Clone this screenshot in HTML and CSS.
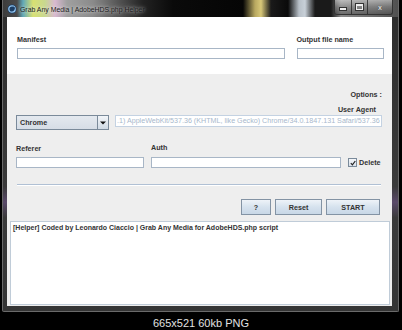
FILE: index.html
```html
<html>
<head>
    <title>Grab Any Media | AdobeHDS.php Helper</title>
    <link rel="stylesheet" href="styles.css">
</head>
<body>
    <div class="window">
        <div class="titlebar">
            <svg class="app-icon" width="10" height="10" viewBox="0 0 10 10">
                <circle cx="5" cy="5" r="4.5" fill="#1d3f66"/>
                <circle cx="5" cy="5" r="3.2" fill="none" stroke="#8fc3ee" stroke-width="1.3"/>
                <circle cx="6.3" cy="4" r="1.6" fill="#1d3f66"/>
            </svg>
            <span class="title">Grab Any Media | AdobeHDS.php Helper</span>
            <div class="caption-buttons">
                <div class="cap-btn min"><span></span></div>
                <div class="cap-btn max"><span></span></div>
                <div class="cap-btn close">x</div>
            </div>
        </div>

        <div class="client">
            <div class="top-panel">
                <div class="field manifest">
                    <label>Manifest</label>
                    <div class="input"></div>
                </div>
                <div class="field output">
                    <label>Output file name</label>
                    <div class="input"></div>
                </div>
            </div>

            <div class="options">
                <div class="opt-title">Options :</div>
                <div class="ua-label">User Agent</div>
                <div class="ua-row">
                    <div class="combo">
                        <span class="combo-text">Chrome</span>
                        <span class="combo-arrow">
                            <svg width="6" height="4" viewBox="0 0 6 4"><path d="M0 0.5H6L3 3.5Z" fill="#111"/></svg>
                        </span>
                    </div>
                    <div class="ua-field">
                        <span>.1) AppleWebKit/537.36 (KHTML, like Gecko) Chrome/34.0.1847.131 Safari/537.36</span>
                    </div>
                </div>
                <div class="auth-row">
                    <div class="field referer">
                        <label>Referer</label>
                        <div class="input"></div>
                    </div>
                    <div class="field auth">
                        <label>Auth</label>
                        <div class="input"></div>
                    </div>
                    <div class="delete">
                        <span class="checkbox">
                            <svg width="6" height="6" viewBox="0 0 6 6"><path d="M0.8 3.2L2.4 4.8L5.3 1" fill="none" stroke="#222" stroke-width="1.2"/></svg>
                        </span>
                        <span>Delete</span>
                    </div>
                </div>
                <div class="separator"></div>
                <div class="buttons">
                    <div class="btn help">?</div>
                    <div class="btn reset">Reset</div>
                    <div class="btn start">START</div>
                </div>
            </div>

            <div class="log">[Helper] Coded by Leonardo Ciaccio | Grab Any Media for AdobeHDS.php script</div>
        </div>
    </div>
    <div class="caption">665x521 60kb PNG</div>
</body>
</html>
```

FILE: styles.css
```css
body {
    margin: 0;
    width: 402px;
    height: 330px;
    overflow: hidden;
    background: #000;
    font-family: "Liberation Sans", Arial, sans-serif;
}
.window {
    margin-left: 2px;
    width: 395px;
    height: 311px;
    border: 1px solid #6a6a6a;
    border-top: none;
    border-radius: 0 0 2px 2px;
    background: linear-gradient(to bottom, #2c2c2c, #3a3a3a 60%, #5a4a6a 65%, #3a3a3a 70%, #353535);
    display: flex;
    flex-direction: column;
}
.titlebar {
    height: 17px;
    display: flex;
    align-items: center;
    position: relative;
    background: linear-gradient(90deg, #3c3c3c 0, #4a4a4a 14px, #5fa8b8 20px, #d8e070 30px, #c8d890 42px, #d8b8d0 52px, #a0a0a0 64px, #8a8a8a 90px, #555 115px, #222 140px, #0a0a0a 170px, #050505 240px, #b8a860 252px, #d8c878 258px, #1a1a1a 268px, #0a0a0a 285px, #b8c0c8 296px, #c8d0d8 302px, #1a1a1a 312px, #1a1a1a 328px, #8a8a8a 338px, #505050 395px);
}
.app-icon {
    margin-left: 4px;
}
.title {
    margin-left: 3px;
    font-size: 6.9px;
    color: #1a1a1a;
    text-shadow: 0 0 3px rgba(255, 255, 255, 0.7), 0 0 6px rgba(255, 255, 255, 0.5);
    padding-top: 1px;
}
.caption-buttons {
    position: absolute;
    right: 5px;
    top: 0;
    height: 14px;
    display: flex;
    border: 1px solid #333;
    border-top: none;
    border-radius: 0 0 3px 3px;
    overflow: hidden;
}
.cap-btn {
    height: 14px;
    background: linear-gradient(to bottom, rgba(230, 230, 230, 0.55), rgba(150, 150, 150, 0.45) 50%, rgba(80, 80, 80, 0.5));
    display: flex;
    align-items: center;
    justify-content: center;
    border-left: 1px solid rgba(40, 40, 40, 0.8);
    color: #eee;
    font-size: 7px;
    font-weight: bold;
}
.cap-btn.min {
    width: 16px;
    border-left: none;
}
.cap-btn.min span {
    width: 6px;
    height: 2px;
    margin-top: 4px;
    background: #eee;
    border: 1px solid #333;
}
.cap-btn.max {
    width: 15px;
}
.cap-btn.max span {
    width: 5px;
    height: 3px;
    border: 1px solid #eee;
    border-top-width: 2px;
    outline: 1px solid #333;
}
.cap-btn.close {
    width: 24px;
    color: #ddd;
    text-shadow: 0 0 1px #333;
}
.client {
    margin: 0 6px 0 4px;
    height: 289px;
    background: #eeeeee;
    display: flex;
    flex-direction: column;
}
.top-panel {
    height: 57px;
    background: #fff;
    display: flex;
    gap: 12px;
    padding: 18px 8px 0 10px;
    box-sizing: border-box;
}
label, .opt-title, .ua-label {
    display: block;
    font-size: 7.2px;
    font-weight: bold;
    color: #333;
    line-height: 9px;
}
.field label {
    margin-bottom: 4px;
}
.input {
    height: 9px;
    border: 1px solid #a8b6c6;
    background: #fff;
}
.manifest {
    width: 269px;
}
.output {
    width: 88px;
}
.options {
    display: flex;
    flex-direction: column;
    padding: 0 10px 0 9px;
}
.opt-title {
    text-align: right;
    margin-top: 16px;
}
.ua-label {
    text-align: right;
    margin-top: 6px;
    padding-right: 6px;
}
.ua-row {
    display: flex;
    align-items: flex-start;
    margin-top: 1px;
    gap: 6px;
}
.combo {
    width: 94px;
    height: 15px;
    box-sizing: border-box;
    border: 1px solid #7a8a9a;
    background: linear-gradient(to bottom, #e4e9ef, #d6dde6);
    display: flex;
    align-items: center;
}
.combo-text {
    flex: 1;
    font-size: 7.2px;
    font-weight: bold;
    color: #333;
    padding-left: 3px;
}
.combo-arrow {
    width: 10px;
    height: 13px;
    border-left: 1px solid #7a8a9a;
    background: linear-gradient(to bottom, #f2f5f8, #d0dae5);
    display: flex;
    align-items: center;
    justify-content: center;
}
.ua-field {
    width: 270px;
    height: 12px;
    box-sizing: border-box;
    border: 1px solid #c4d2e2;
    background: #fff;
    overflow: hidden;
    white-space: nowrap;
    font-size: 7.15px;
    line-height: 10px;
    color: #a8b8cc;
    padding-left: 1px;
}
.auth-row {
    display: flex;
    align-items: flex-end;
    margin-top: 13px;
}
.referer {
    width: 128px;
}
.auth {
    width: 190px;
    margin-left: 7px;
}
.auth label {
    margin-bottom: 5px;
}
.delete {
    display: flex;
    align-items: center;
    gap: 2px;
    margin-left: 7px;
    margin-bottom: 1px;
    font-size: 7.2px;
    font-weight: bold;
    color: #333;
}
.checkbox {
    width: 7px;
    height: 7px;
    border: 1px solid #7a8a9a;
    background: linear-gradient(to bottom, #f4f6f9, #d8e0ea);
    display: flex;
    align-items: center;
    justify-content: center;
}
.separator {
    margin: 16px 1px 0 1px;
    height: 1px;
    background: #b0c0d4;
    border-bottom: 1px solid #fff;
}
.buttons {
    display: flex;
    justify-content: flex-end;
    gap: 4px;
    margin-top: 13px;
    padding-right: 2px;
}
.btn {
    height: 16px;
    box-sizing: border-box;
    border: 1px solid #8393a4;
    background: linear-gradient(to bottom, #eef3f8, #d6e2ee 50%, #c8d7e6);
    font-size: 7.2px;
    font-weight: bold;
    color: #333;
    display: flex;
    align-items: center;
    justify-content: center;
}
.help {
    width: 30px;
}
.reset {
    width: 47px;
}
.start {
    width: 54px;
}
.log {
    margin: 6px 2px 0 3px;
    height: 84px;
    box-sizing: border-box;
    border: 1px solid #c0ccd8;
    background: #fff;
    font-size: 7px;
    font-weight: bold;
    color: #333;
    padding: 2px 2px;
    line-height: 8px;
}
.caption {
    text-align: center;
    font-size: 11px;
    color: #e2e2e2;
    margin-top: 5px;
}
```
